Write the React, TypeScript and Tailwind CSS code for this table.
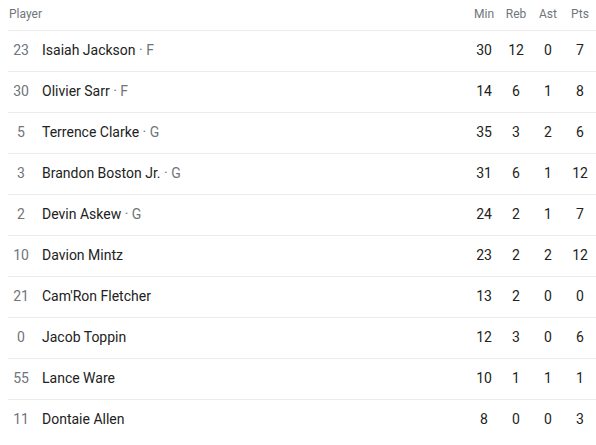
const players = [
  { num: '23', name: 'Isaiah Jackson', pos: 'F', min: 30, reb: 12, ast: 0, pts: 7 },
  { num: '30', name: 'Olivier Sarr', pos: 'F', min: 14, reb: 6, ast: 1, pts: 8 },
  { num: '5', name: 'Terrence Clarke', pos: 'G', min: 35, reb: 3, ast: 2, pts: 6 },
  { num: '3', name: 'Brandon Boston Jr.', pos: 'G', min: 31, reb: 6, ast: 1, pts: 12 },
  { num: '2', name: 'Devin Askew', pos: 'G', min: 24, reb: 2, ast: 1, pts: 7 },
  { num: '10', name: 'Davion Mintz', pos: '', min: 23, reb: 2, ast: 2, pts: 12 },
  { num: '21', name: "Cam'Ron Fletcher", pos: '', min: 13, reb: 2, ast: 0, pts: 0 },
  { num: '0', name: 'Jacob Toppin', pos: '', min: 12, reb: 3, ast: 0, pts: 6 },
  { num: '55', name: 'Lance Ware', pos: '', min: 10, reb: 1, ast: 1, pts: 1 },
  { num: '11', name: 'Dontaie Allen', pos: '', min: 8, reb: 0, ast: 0, pts: 3 },
];

export default function App() {
  return (
    <div className="w-[596px] h-[445px] bg-white pl-[8px] font-['Roboto',sans-serif] overflow-hidden">
      <div className="flex items-center h-[30px] pb-[2px] text-[12px] text-[#70757a]">
        <div className="flex-1 pl-[1px]">Player</div>
        <div className="w-[32px] text-center">Min</div>
        <div className="w-[32px] text-center">Reb</div>
        <div className="w-[32px] text-center">Ast</div>
        <div className="w-[32px] text-center">Pts</div>
      </div>
      {players.map((p) => (
        <div key={p.name} className="flex items-center h-[41px] pb-[1px] border-t border-[#ebebeb] text-[14px] text-[#222222]">
          <div className="w-[26px] text-center text-[#70757a]">{p.num}</div>
          <div className="flex-1 pl-[8px]">
            {p.name}
            {p.pos && <span className="text-[#70757a]"> · {p.pos}</span>}
          </div>
          <div className="w-[32px] text-center">{p.min}</div>
          <div className="w-[32px] text-center">{p.reb}</div>
          <div className="w-[32px] text-center">{p.ast}</div>
          <div className="w-[32px] text-center">{p.pts}</div>
        </div>
      ))}
    </div>
  );
}
